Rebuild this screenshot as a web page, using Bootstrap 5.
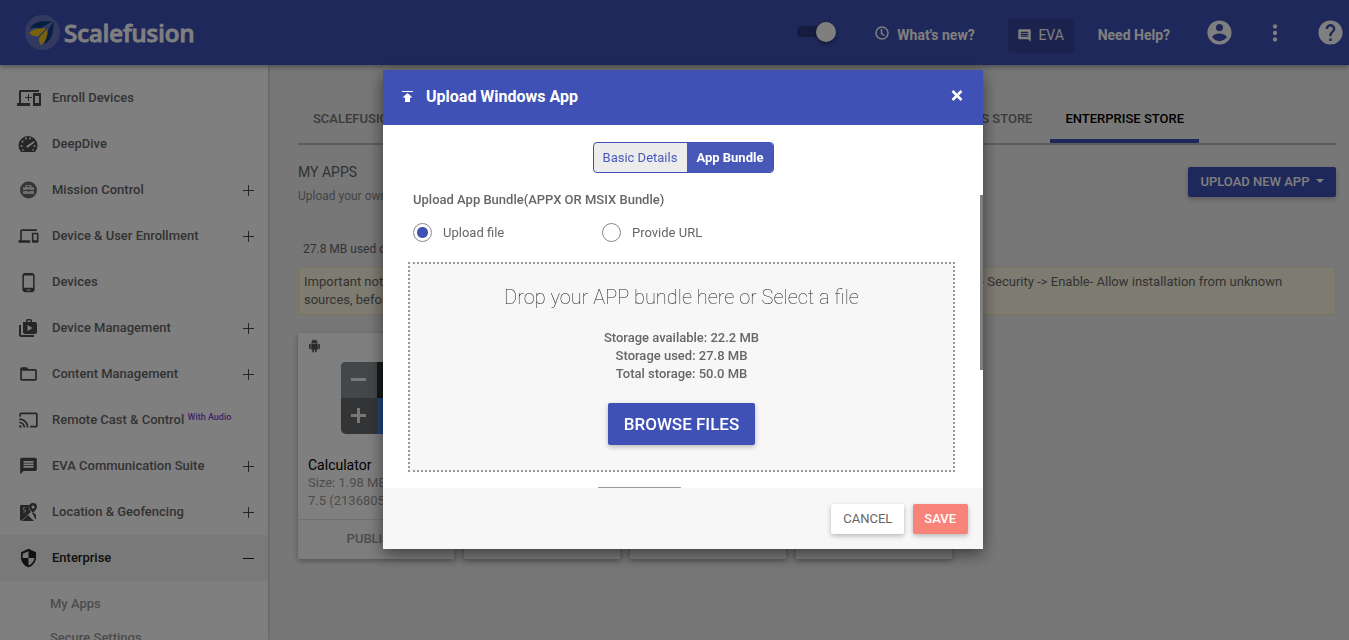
<!DOCTYPE html>
<html lang="en">
<head>
<meta charset="utf-8">
<meta name="viewport" content="width=device-width, initial-scale=1">
<title>Scalefusion - Enterprise Store</title>
<link href="https://cdn.jsdelivr.net/npm/bootstrap@5.3.0/dist/css/bootstrap.min.css" rel="stylesheet">
<style>
  :root { --brand: #3f51b5; }
  body { font-family: Roboto, "Liberation Sans", sans-serif; font-size: 13px; line-height: 18px; color: #666; background: #eee; height: 100vh; overflow: hidden; }
  svg { display: block; flex: none; fill: currentColor; }
  svg.outline { fill: none; stroke: currentColor; }
  a { color: inherit; text-decoration: none; }
  button { font: inherit; }

  /* top bar */
  .topbar { height: 65px; background: var(--brand); color: #fff; padding: 0 4px 0 25px; box-shadow: 0 2px 5px rgba(0,0,0,.35); position: relative; z-index: 2; }
  .brand-name { font: 500 24px/34px "Noto Sans", sans-serif; margin-left: 4px; -webkit-text-stroke: 1px currentColor; }
  .top-link { font-size: 14px; font-weight: 700; padding-top: 4px; }
  .top-link svg { margin-bottom: 4px; }
  .theme-switch { appearance: none; width: 39px; height: 20px; margin: 0 39px 2px 0; background: linear-gradient(#2c3980, #2c3980) 0 50% / 34px 11px no-repeat; border-radius: 10px; position: relative; }
  .theme-switch::after { content: ""; position: absolute; right: 0; top: 0; width: 20px; height: 20px; border-radius: 50%; background: #fff; box-shadow: 0 2px 4px rgba(0,0,0,.4); }
  .eva-btn { height: 35px; width: 66px; margin: 5px 24px 0 33px; border: 0; border-radius: 4px; background: #37449a; color: #fff; font-size: 14px; gap: 6px; }
  .round-btn { border: 0; background: none; color: #fff; padding: 0; }

  /* side menu */
  .sidemenu { width: 268px; flex: none; background: #fff; box-shadow: 0 0 3px rgba(0,0,0,.3); padding-top: 10px; overflow: hidden; }
  .menu-row { height: 46px; font-weight: 500; color: #666; padding-right: 14px; }
  .menu-row svg { color: #4c4c4c; }
  .menu-icon { width: 52px; padding-left: 16px; flex: none; }
  .menu-icon svg { margin-left: 2px; }
  .menu-icon .wide { margin-left: 0; }
  .menu-row sup { font-size: 9px; color: #7a4bd0; top: -4px; font-weight: 500; }
  .menu-row.current { background: #f2f2f2; color: #222; }
  .menu-row.current svg { color: #222; }
  .sub-menu { padding-top: 6px; }
  .sub-row { height: 34px; padding-left: 50px; font-weight: 500; color: #999; }

  /* content */
  .content { padding: 31px 13px 0 30px; min-width: 0; }
  .store-tabs { border-bottom: 2px solid #bbb; gap: 3px; padding-right: 137px; flex-wrap: nowrap; white-space: nowrap; font-weight: 500; }
  .store-tabs .nav-link { padding: 14px 15px 11px; border-bottom: 4px solid transparent; color: #757575; }
  .store-tabs .nav-link.active { color: #000; border-color: var(--brand); }
  .section-head { margin-top: 18px; }
  .section-title { font-size: 14px; font-weight: 400; line-height: 18px; margin: 0; }
  .hint { font-size: 12px; color: #8a8a8a; margin-top: 6px; }
  .btn-flat { --bs-btn-border-radius: 2px; border: 0; font-size: 13px; line-height: 18px; padding: 6px 12px; font-weight: 500; box-shadow: 0 2px 5px rgba(0,0,0,.26); }
  .btn-brand, .btn-brand:hover { background: var(--brand); color: #fff; }
  .new-app-btn::after { border-width: 4px 4px 0; }
  .usage { font-size: 12px; margin: 35px 5px 9px; }
  .notice { background: #fcf8e3; border: 1px solid #f3e6c4; border-radius: 2px; padding: 5px; min-height: 48px; margin-bottom: 18px; }
  .app-tile { width: 156px; height: 226px; background: #fff; box-shadow: 0 2px 5px rgba(0,0,0,.3); }
  .app-body { padding: 6px 10px 0; height: 186px; color: #999; }
  .app-name { font-size: 14px; color: #000; }
  .app-foot { height: 40px; border-top: 1px solid #e3e3e3; background: #fafafa; font-weight: 500; color: #999; padding: 0 6px 2px 0; }
  .calc-icon { margin: 9px auto 22px 33px; }

  /* dialog */
  .modal-backdrop { opacity: .5; }
  .upload-modal { padding-left: 17px; }
  .upload-modal .modal-dialog { max-width: 600px; margin-top: 70px; }
  .upload-modal .modal-content { border: 0; border-radius: 0; box-shadow: 0 5px 15px rgba(0,0,0,.5); color: #666; }
  .upload-modal .modal-header { background: var(--brand); color: #fff; height: 55px; padding: 0 19px 2px; border: 0; border-radius: 0; }
  .upload-modal .modal-title { font-size: 16px; font-weight: 700; line-height: 24px; margin-left: 13px; }
  .close-btn { border: 0; background: none; color: #fff; padding: 0 0 2px; }
  .upload-modal .modal-body { padding: 17px 28px 0 25px; max-height: 363px; overflow: hidden; }
  .scroll-thumb { position: absolute; right: 0; top: 70px; width: 3px; height: 175px; background: #7f7f7f; }
  .steps { border: 1px solid var(--brand); border-radius: 4px; overflow: hidden; background: #ececec; }
  .steps button { border: 0; padding: 0 10px 0 9px; height: 29px; background: none; color: #4a5abd; }
  .steps button.active { background: #4758b8; color: #fff; font-weight: 700; }
  .form-part { padding: 18px 0 0 5px; }
  .field-title { font-size: 13px; font-weight: 500; margin: 0 0 14px; line-height: 18px; }
  .choice { width: 189px; gap: 11px; }
  .choice input { appearance: none; width: 19px; height: 19px; margin: 0; border: 1px solid #888; border-radius: 50%; }
  .choice input:checked { background: radial-gradient(circle, var(--brand) 0 5px, transparent 6px); }
  .drop-zone { border: 2px dotted #999; background: #f7f7f7; margin-top: 20px; height: 210px; padding-top: 20px; }
  .drop-title { font-size: 20px; font-weight: 100; line-height: 26px; margin: 0 0 19px; color: #222; }
  .storage { font-weight: 500; }
  .browse-btn { font-size: 17px; line-height: 24px; padding: 9px 16px; margin-top: 20px; }
  .next-field { width: 85px; height: 30px; border: 1px solid #999; border-radius: 2px; background: #fff; margin: 15px 0 0 189px; }
  .upload-modal .modal-footer { background: #f7f7f7; border: 0; border-radius: 0; padding: 0 15px; height: 61px; gap: 9px; }
  .upload-modal .modal-footer > * { margin: 0; }
  .upload-modal .modal-footer .btn { font-weight: 400; }
  .upload-modal .modal-footer .btn-save { background: #f88379; color: #fff; font-weight: 500; padding: 6px 12px 6px 11px; }
  .upload-modal .modal-footer .btn-cancel { background: #fff; color: #666; }
</style>
</head>
<body class="d-flex flex-column">

<header class="topbar d-flex align-items-center flex-shrink-0">
  <a href="#" class="d-flex align-items-center me-auto">
    <svg width="35" height="35" viewBox="0 0 35 35"><circle cx="17.500" cy="17.500" r="17.500" fill="#6672be"/><path d="M5 13.500C9 6.500 16 6 27 6.500L15 13.500Q10 12 5 13.500Z" fill="#0d3f80"/><path d="M28.500 6.500c0 10-1 18-9 22.500l2.500-12Z" fill="#0d3f80"/><path d="M4 17.500c5-4 11-5 17.500-4l-9 8c-3 0-6-1-8.500-4Z" fill="#f5c518"/><path d="M14.500 22l8-8c.5 7-1.500 12-6.500 16-1.500-2-2.500-5-1.500-8Z" fill="#f5c518"/><path d="M13 22.500L28 6.500" stroke="#6672be" stroke-width="1"/></svg>
    <span class="brand-name">Scalefusion</span>
  </a>
  <input class="theme-switch" type="checkbox" role="switch" aria-label="Toggle view" checked>
  <a href="#" class="top-link d-flex align-items-center gap-2">
    <svg class="outline" width="14" height="14" viewBox="0 0 14 14" stroke-width="1.500"><circle cx="7" cy="7" r="6"/><path d="M6.500 3v4.500l3 2"/></svg>What's new?</a>
  <button class="eva-btn d-flex align-items-center justify-content-center" type="button">
    <svg width="15" height="15" viewBox="0 0 24 24"><path d="M22 4c0-1.100-.9-2-2-2H4c-1.100 0-2 .9-2 2v12c0 1.100.9 2 2 2h14l4 4zM18 14H6v-2h12v2zm0-3H6V9h12v2zm0-3H6V6h12v2z"/></svg>EVA</button>
  <a href="#" class="top-link">Need Help?</a>
  <button class="round-btn" type="button" aria-label="Account" style="margin-left:35px"><svg width="29" height="29" viewBox="0 0 24 24"><path d="M12 2C6.480 2 2 6.480 2 12s4.480 10 10 10 10-4.480 10-10S17.520 2 12 2zm0 3c1.660 0 3 1.340 3 3s-1.340 3-3 3-3-1.340-3-3 1.340-3 3-3zm0 14.200c-2.500 0-4.710-1.280-6-3.220.03-1.990 4-3.080 6-3.080 1.990 0 5.970 1.090 6 3.080-1.290 1.940-3.500 3.220-6 3.220z"/></svg></button>
  <button class="round-btn" type="button" aria-label="More" style="margin-left:28px"><svg width="26" height="26" viewBox="0 0 24 24"><circle cx="12" cy="6" r="2"/><circle cx="12" cy="12" r="2"/><circle cx="12" cy="18" r="2"/></svg></button>
  <button class="round-btn" type="button" aria-label="Help" style="margin-left:28px"><svg width="29" height="29" viewBox="0 0 24 24"><path d="M12 2C6.480 2 2 6.480 2 12s4.480 10 10 10 10-4.480 10-10S17.520 2 12 2zm1 17h-2v-2h2v2zm2.070-7.750l-.9.920C13.450 12.900 13 13.500 13 15h-2v-.5c0-1.100.450-2.100 1.170-2.830l1.240-1.260c.370-.36.590-.86.590-1.410 0-1.100-.9-2-2-2s-2 .9-2 2H8c0-2.210 1.790-4 4-4s4 1.790 4 4c0 .880-.36 1.680-.93 2.250z"/></svg></button>
</header>

<div class="d-flex flex-grow-1 overflow-hidden">
  <nav class="sidemenu" aria-label="Main menu">
    <a href="#" class="menu-row d-flex align-items-center"><span class="menu-icon"><svg class="wide" width="26" height="20" viewBox="0 0 26 20"><path d="M4 2h19v2H5v11h9v3H1v-3h2V4q0-2 1-2ZM17 5h8v13h-8ZM19 8v7h4V8ZM12 6h1v3h3v1h-3v3h-1v-3H9V9h3Z" fill-rule="evenodd"/></svg></span><span>Enroll Devices</span></a>
    <a href="#" class="menu-row d-flex align-items-center"><span class="menu-icon"><svg width="20" height="18" viewBox="0 0 20 18"><path d="M3 17a9.500 9.500 0 1 1 14 0Z"/><g fill="#fff"><circle cx="3.500" cy="11" r="1"/><circle cx="4.500" cy="6.500" r="1"/><circle cx="8" cy="3.500" r="1"/><circle cx="12" cy="3.500" r="1"/><circle cx="16.500" cy="11" r="1"/><path d="M8.500 11 16 6l.5 1.500-6.500 5q-1.500.5-1.500-1.500Z"/><path d="M4 14.500h2v1H4zM14 14.500h2v1h-2z"/></g></svg></span><span>DeepDive</span></a>
    <a href="#" class="menu-row d-flex align-items-center"><span class="menu-icon"><svg width="20" height="20" viewBox="0 0 20 20"><circle cx="10.500" cy="10" r="8.500" fill="#6c6c6c"/><path d="M5 7h2.500V5h6v2H16v7H5ZM9 7h3V6H9Z" fill="#ddd" fill-rule="evenodd"/><path d="M5 10h11v1H5zM9.500 9.500h2v2h-2z" fill="#666"/></svg></span><span class="me-auto">Mission Control</span><svg width="12" height="12" viewBox="0 0 12 12"><path d="M1 6h11v1H1zM6 1h1v11H6z"/></svg></a>
    <a href="#" class="menu-row d-flex align-items-center"><span class="menu-icon"><svg width="21" height="20" viewBox="0 0 24 24"><path d="M4 6h18V4H4c-1.100 0-2 .9-2 2v11H0v3h14v-3H4V6zm19 2h-6c-.55 0-1 .45-1 1v10c0 .55.450 1 1 1h6c.55 0 1-.45 1-1V9c0-.55-.45-1-1-1zm-1 9h-4v-7h4v7z"/></svg></span><span class="me-auto">Device &amp; User Enrollment</span><svg width="12" height="12" viewBox="0 0 12 12"><path d="M1 6h11v1H1zM6 1h1v11H6z"/></svg></a>
    <a href="#" class="menu-row d-flex align-items-center"><span class="menu-icon"><svg width="21" height="21" viewBox="0 0 24 24"><path d="M16 1H8C6.340 1 5 2.340 5 4v16c0 1.660 1.340 3 3 3h8c1.660 0 3-1.340 3-3V4c0-1.660-1.340-3-3-3zm-2 20h-4v-1h4v1zm3.250-3H6.750V4h10.500v14z"/></svg></span><span>Devices</span></a>
    <a href="#" class="menu-row d-flex align-items-center"><span class="menu-icon"><svg width="20" height="20" viewBox="0 0 20 20"><path d="M1 7h2v10h13v2H3q-2 0-2-2ZM5 4h3V2.500Q8 1 9.500 1h3Q14 1 14 2.500V4h3q2 0 2 2v8q0 2-2 2H7q-2 0-2-2ZM9.500 4h3V2.500h-3ZM9.500 7v6l5-3Z" fill-rule="evenodd"/></svg></span><span class="me-auto">Device Management</span><svg width="12" height="12" viewBox="0 0 12 12"><path d="M1 6h11v1H1zM6 1h1v11H6z"/></svg></a>
    <a href="#" class="menu-row d-flex align-items-center"><span class="menu-icon"><svg width="21" height="20" viewBox="0 0 24 24"><path d="M20 6h-8l-2-2H4c-1.100 0-2 .9-2 2v12c0 1.100.9 2 2 2h16c1.100 0 2-.9 2-2V8c0-1.100-.9-2-2-2zm0 12H4V8h16v10z"/></svg></span><span class="me-auto">Content Management</span><svg width="12" height="12" viewBox="0 0 12 12"><path d="M1 6h11v1H1zM6 1h1v11H6z"/></svg></a>
    <a href="#" class="menu-row d-flex align-items-center"><span class="menu-icon"><svg width="21" height="20" viewBox="0 0 24 24"><path d="M21 3H3c-1.100 0-2 .9-2 2v3h2V5h18v14h-7v2h7c1.100 0 2-.9 2-2V5c0-1.100-.9-2-2-2zM1 18v3h3c0-1.660-1.340-3-3-3zm0-4v2c2.760 0 5 2.240 5 5h2c0-3.870-3.130-7-7-7zm0-4v2c4.970 0 9 4.030 9 9h2c0-6.080-4.930-11-11-11z"/></svg></span><span>Remote Cast &amp; Control <sup>With Audio</sup></span></a>
    <a href="#" class="menu-row d-flex align-items-center"><span class="menu-icon"><svg width="21" height="20" viewBox="0 0 24 24"><path d="M20 2H4c-1.100 0-2 .9-2 2v18l4-4h14c1.100 0 2-.9 2-2V4c0-1.100-.9-2-2-2zm-2 12H6v-2h12v2zm0-3H6V9h12v2zm0-3H6V6h12v2z"/></svg></span><span class="me-auto">EVA Communication Suite</span><svg width="12" height="12" viewBox="0 0 12 12"><path d="M1 6h11v1H1zM6 1h1v11H6z"/></svg></a>
    <a href="#" class="menu-row d-flex align-items-center"><span class="menu-icon"><svg width="20" height="20" viewBox="0 0 20 20"><path d="M3 3h8q-1 4 2 7L3 19Q2 18.500 2 17.500V4q0-1 1-1ZM4 19l6-6 6 6ZM14 11l4 7V13l-2-2ZM15 1q4 0 4 4 0 2-4 6-4-4-4-6 0-4 4-4ZM15 3.500a1.500 1.500 0 1 0 0 3 1.500 1.500 0 1 0 0-3Z" fill-rule="evenodd"/><path d="M7.500 5.500H5.500v2.500h2v2H5" fill="none" stroke="#bbb"/></svg></span><span class="me-auto">Location &amp; Geofencing</span><svg width="12" height="12" viewBox="0 0 12 12"><path d="M1 6h11v1H1zM6 1h1v11H6z"/></svg></a>
    <a href="#" class="menu-row current d-flex align-items-center"><span class="menu-icon"><svg width="21" height="20" viewBox="0 0 24 24"><path d="M12 1 3 5v6c0 5.550 3.840 10.740 9 12 5.160-1.260 9-6.450 9-12V5zM12 4v8H5V7ZM12 12h7c-.5 4.100-3.300 7.800-7 8.900Z" fill-rule="evenodd"/></svg></span><span class="me-auto">Enterprise</span><svg width="12" height="12" viewBox="0 0 12 12"><path d="M1 6h11v1H1z"/></svg></a>
    <div class="sub-menu">
      <a href="#" class="sub-row d-flex align-items-center">My Apps</a>
      <a href="#" class="sub-row d-flex align-items-center">Secure Settings</a>
    </div>
  </nav>

  <main class="content flex-grow-1">
    <nav class="nav store-tabs">
      <a class="nav-link flex-grow-1" href="#">SCALEFUSION APPS</a>
      <a class="nav-link flex-grow-1" href="#">PLAY FOR WORK APPS</a>
      <a class="nav-link flex-grow-1" href="#">APPLE APP STORE</a>
      <a class="nav-link" href="#">WINDOWS BUSINESS STORE</a>
      <a class="nav-link active" href="#">ENTERPRISE STORE</a>
    </nav>
    <div class="section-head d-flex justify-content-between align-items-start">
      <div>
        <h1 class="section-title">MY APPS</h1>
        <div class="hint">Upload your own apps</div>
      </div>
      <button class="btn btn-flat btn-brand new-app-btn dropdown-toggle mt-1" type="button">UPLOAD NEW APP&nbsp;</button>
    </div>
    <div class="usage">27.8 MB used of 50.0 MB</div>
    <div class="notice">Important note: To install the uploaded Android apps on your managed devices, please enable it from Device Settings - Security -&gt; Enable- Allow installation from unknown sources, before publishing</div>
    <div class="d-flex" style="gap:10px">
      <article class="app-tile">
        <div class="app-body">
          <svg width="13" height="14" viewBox="0 0 24 24" style="color:#555"><path d="M6 18c0 .55.450 1 1 1h1v3.500c0 .83.670 1.500 1.500 1.500s1.500-.67 1.500-1.500V19h2v3.500c0 .83.670 1.500 1.500 1.500s1.500-.67 1.500-1.500V19h1c.55 0 1-.45 1-1V8H6v10zM3.500 8C2.670 8 2 8.670 2 9.500v7c0 .83.670 1.500 1.500 1.500S5 17.330 5 16.500v-7C5 8.670 4.330 8 3.500 8zm17 0c-.83 0-1.500.67-1.500 1.500v7c0 .83.670 1.500 1.500 1.500s1.500-.67 1.500-1.500v-7c0-.83-.67-1.500-1.500-1.500zM15.500 2.200 17 .8l-.8-.8-1.600 1.600a6 6 0 0 0-5.200 0L7.800 0 7 .8l1.500 1.400C7 3.300 6 5 6 7h12c0-2-1-3.700-2.500-4.800zM10 5H9V4h1v1zm5 0h-1V4h1v1z"/></svg>
          <svg class="calc-icon" width="72" height="72" viewBox="0 0 72 72"><rect width="72" height="72" rx="5" fill="#65696c"/><path d="M0 36V5q0-5 5-5h31v36Z" fill="#868e92"/><path d="M36 0h31q5 0 5 5v31H36Z" fill="#333"/><path d="M36 36h36v31q0 5-5 5H36Z" fill="#4285f4"/><path d="M10 16h15v3H10zM10 52h15v3H10zM16 46h3v15h-3z" fill="#eee"/></svg>
          <div class="app-name">Calculator</div>
          <div>Size: 1.98 MB</div>
          <div>7.5 (213680556)</div>
        </div>
        <div class="app-foot d-flex align-items-center justify-content-center">PUBLISH</div>
      </article>
      <article class="app-tile"><div class="app-body"></div><div class="app-foot"></div></article>
      <article class="app-tile"><div class="app-body"></div><div class="app-foot"></div></article>
      <article class="app-tile"><div class="app-body"></div><div class="app-foot"></div></article>
    </div>
  </main>
</div>

<div class="modal-backdrop"></div>
<div class="modal upload-modal d-block" role="dialog" aria-labelledby="dlgTitle">
  <div class="modal-dialog">
    <div class="modal-content">
      <div class="modal-header">
        <svg width="11" height="11" viewBox="0 0 11 11"><path d="M0 0h11v1H0zM5.500 2 10.500 6.500H8V11H3V6.500H.5Z"/></svg>
        <h2 class="modal-title me-auto" id="dlgTitle">Upload Windows App</h2>
        <button class="close-btn" type="button" aria-label="Close"><svg width="14" height="14" viewBox="0 0 14 14"><path d="M2.500 2 11.500 11M11.500 2 2.500 11" stroke="currentColor" stroke-width="2.500"/></svg></button>
      </div>
      <div class="modal-body">
        <div class="d-flex justify-content-center ps-1">
          <div class="steps d-flex">
            <button type="button">Basic Details</button>
            <button type="button" class="active">App Bundle</button>
          </div>
        </div>
        <fieldset class="form-part">
          <legend class="field-title">Upload App Bundle(APPX OR MSIX Bundle)</legend>
          <div class="d-flex">
            <label class="choice d-flex align-items-center"><input type="radio" name="source" checked>Upload file</label>
            <label class="choice d-flex align-items-center"><input type="radio" name="source">Provide URL</label>
          </div>
        </fieldset>
        <div class="drop-zone text-center">
          <p class="drop-title">Drop your APP bundle here or Select a file</p>
          <div class="storage">
            <div>Storage available: 22.2 MB</div>
            <div>Storage used: 27.8 MB</div>
            <div>Total storage: 50.0 MB</div>
          </div>
          <button class="btn btn-flat btn-brand browse-btn" type="button">BROWSE FILES</button>
        </div>
        <div class="next-field"></div>
        <div class="scroll-thumb"></div>
      </div>
      <div class="modal-footer">
        <button class="btn btn-flat btn-cancel" type="button">CANCEL</button>
        <button class="btn btn-flat btn-save" type="button">SAVE</button>
      </div>
    </div>
  </div>
</div>
<script src="https://cdn.jsdelivr.net/npm/bootstrap@5.3.0/dist/js/bootstrap.bundle.min.js"></script>
</body>
</html>
